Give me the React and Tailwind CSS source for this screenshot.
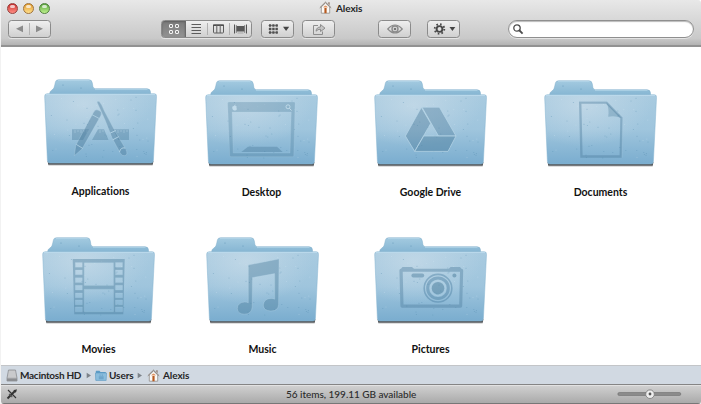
import React from "react";

const FONT = "font-['Lato','Noto_Sans',sans-serif] [font-variant-ligatures:none]";

const specks = Array.from({ length: 60 }, (_, i) => ({
  x: 5 + ((i * 37.7 + i * i * 3.1) % 103),
  y: 17 + ((i * 23.3 + i * i * 1.7) % 64),
  dark: i % 3 !== 0,
}));

function Folder({ children }) {
  return (
    <svg width="113" height="89" viewBox="0 0 113 89" className="block shrink-0">
      <defs>
        <linearGradient id="front" x1="0" y1="0" x2="0" y2="1">
          <stop offset="0" stopColor="#a9cbe0" />
          <stop offset="0.5" stopColor="#9fc5dd" />
          <stop offset="1" stopColor="#7aadcf" />
        </linearGradient>
        <radialGradient id="sheen" cx="0.35" cy="0.15" r="0.6">
          <stop offset="0" stopColor="#d4e2ec" stopOpacity="0.55" />
          <stop offset="1" stopColor="#d4e2ec" stopOpacity="0" />
        </radialGradient>
        <linearGradient id="back" x1="0" y1="0" x2="0" y2="1">
          <stop offset="0" stopColor="#a3cae0" />
          <stop offset="1" stopColor="#82b3d1" />
        </linearGradient>
        <linearGradient id="shade" x1="0" y1="0" x2="0" y2="1">
          <stop offset="0" stopColor="#3a3f44" />
          <stop offset="0.6" stopColor="#5b5e61" />
          <stop offset="1" stopColor="#fff" stopOpacity="0" />
        </linearGradient>
      </defs>
      <path d="M3.6 82H109.4L108.5 87.5H4.5Z" fill="url(#shade)" />
      <path
        d="M5.8 17V13.8Q6 12 8 11Q10.3 9.8 10.8 6L11.3 3.5Q11.8 .7 14.5 .7H45Q47.8 .7 48.3 4L48.9 7.5Q49.3 9.7 51.5 9.7H103Q106.3 9.7 106.5 13V17Z"
        fill="url(#back)" stroke="#80afcb" strokeWidth=".5"
      />
      <path
        d="M3.3 14.7H110.2Q112.8 14.7 112.5 17.5L109.4 81.5Q109.2 84 107 84H5.8Q3.6 84 3.4 81.5L.7 17.5Q.5 14.7 3.3 14.7Z"
        fill="url(#front)"
      />
      <path
        d="M3.3 14.7H110.2Q112.8 14.7 112.5 17.5L109.4 81.5Q109.2 84 107 84H5.8Q3.6 84 3.4 81.5L.7 17.5Q.5 14.7 3.3 14.7Z"
        fill="url(#sheen)" stroke="#86b4d0" strokeWidth=".5"
      />
      <path d="M2 15.4H111" stroke="#bcdbec" strokeWidth="1" />
      <path d="M14 1.5H45.5M51 10.4H103.5" stroke="#b4d6e8" strokeWidth=".8" />
      {specks.map((s, i) => (
        <circle key={i} cx={s.x} cy={s.y} r=".5" fill={s.dark ? "#4f87ab" : "#d4e8f4"} opacity=".42" />
      ))}
      <circle cx="19" cy="6" r=".6" fill="#4f87ab" opacity=".6" />
      <circle cx="37" cy="9" r=".6" fill="#4f87ab" opacity=".6" />
      <g fill="#4a7b9a" fillOpacity=".32">{children}</g>
    </svg>
  );
}

const light = "#b4d4e6";

const AppsGlyph = (
  <>
    <path d="M28 50.3H45L39 61H28ZM54 50.3H60L64.5 61H48ZM69 50.3H85V61H74.5Z" fillOpacity=".38" />
    <path d="M31 51v3M34 51v2M37 51v3M40 51v2M43 51v3M56 51v3M59 51v2M71 51v2M74 51v3M77 51v2M80 51v3M83 51v2" stroke={light} strokeWidth=".6" opacity=".8" />
    <path d="M49.6 33.2Q51.6 29.6 55 31.4Q58.6 33.2 56.7 36.8L38 70L30.3 76.7L31.8 66.2Z" fillOpacity=".46" stroke={light} strokeOpacity=".55" strokeWidth=".6" />
    <path d="M48 35.7L55.4 39.6M32.2 65.4L38.8 69.4" stroke={light} strokeWidth=".8" />
    <path d="M53.2 23.4Q53.4 21.3 55.4 22.8Q57.5 25 60.2 31.8L71.2 52.6L81.7 70Q84.4 75.2 81.2 76.6Q78.4 77.6 76.2 74L68 58.8L61.5 42Z" fillOpacity=".44" stroke={light} strokeOpacity=".55" strokeWidth=".6" />
    <path d="M65.8 54.3L71.8 51.5M68.8 60.8L74.8 57.6M75.4 73.1Q76.8 68 81 69" stroke={light} strokeWidth=".9" fill="none" />
  </>
);

const DesktopGlyph = (
  <>
    <path fillRule="evenodd" d="M24 22H89Q90 22 90 23L88.8 75.5Q88.7 76.7 87.5 76.7H26Q24.8 76.7 24.7 75.5L22.7 23.2Q22.7 22 24 22ZM27 32L28.2 73H85L86.3 32Z" stroke={light} strokeOpacity=".4" strokeWidth=".5" />
    <path d="M43 66.7H72L77.7 72H36.3Z" fillOpacity=".4" />
    <path d="M27.2 28Q27 25.7 29 25.9Q29.5 24.7 30.7 24.5Q30.5 25.8 30 26Q31.5 25.8 31.8 26.7Q30.8 28 32 29Q31 31 29.5 30.4Q27.7 30.8 27.2 28Z" fill="#c2dbea" fillOpacity="1" />
    <circle cx="83" cy="26.8" r="2" fill="none" stroke="#c2dbea" strokeWidth=".9" />
    <path d="M84.4 28.3L86.5 30.5" stroke="#c2dbea" strokeWidth="1" />
  </>
);

const DriveGlyph = (
  <g stroke="#b9d7e8" strokeWidth=".7" strokeLinejoin="round" fillOpacity=".44">
    <path d="M48 27.2H65.4L82 56H64.5Z" fillOpacity=".4" />
    <path d="M47.4 27.4L31.4 56L40.7 71.4L56.7 43.4Z" />
    <path d="M49.7 56H82L74 71.4H40.7Z" fillOpacity=".48" />
  </g>
);

const DocumentGlyph = (
  <>
    <path fillRule="evenodd" d="M35 21.4H63L78.7 37.5L77.9 77.7H36.3ZM37.4 23.8L38.6 75.3H75.6L76.3 38.3L62 23.8Z" fillOpacity=".4" />
    <path d="M62.5 22.5Q65.5 29 64.2 36.8Q71 35.5 77.5 38Z" />
    <path d="M35 21.4H63L78.7 37.5L77.9 77.7" fill="none" stroke={light} strokeOpacity=".5" strokeWidth=".5" />
  </>
);

const holes = [25.4, 33, 40.7, 48.3, 56, 62.9, 70];
const holePath = holes.map((y) => `M33.3 ${y}h7v4.8h-7ZM73.5 ${y}h7v4.8h-7Z`).join("");
const MoviesGlyph = (
  <>
    <path fillRule="evenodd" fillOpacity=".42" d={"M30.7 22H82.7L81.3 77.3H32.3ZM42.2 25.7V48.6H71.5V25.7ZM42.2 52.2V74.7H71.5V52.2Z" + holePath} />
    <path d={"M42.2 25.7V48.6H71.5V25.7ZM42.2 52.2V74.7H71.5V52.2Z" + holePath} fill="none" stroke={light} strokeOpacity=".4" strokeWidth=".5" />
  </>
);

const MusicGlyph = (
  <path
    d="M42.4 28L73 22L72.6 67.5Q72.3 74 64.8 74Q57.3 73.6 57.3 68Q58 61.5 65 61.4Q67.3 61.3 68.7 62.2V36.6L46.4 40.6L46.2 70Q45.8 77 38.4 77.2Q31.5 77 31.3 71.5Q31.8 65.3 38.8 65Q41 65 42.3 65.8Z"
    fillOpacity=".42" stroke={light} strokeOpacity=".55" strokeWidth=".6"
  />
);

const PicturesGlyph = (
  <>
    <path fillRule="evenodd" d="M25.4 33.5Q25.4 31.7 27 31.7L28.5 30H38L40 31.8H74.8L76.5 30H86L87.5 31.7Q89.2 31.8 89.2 33.5L88.2 69Q88.2 70.7 86.5 70.7H28.2Q26.5 70.7 26.4 69ZM28.7 34.7L29.5 67.5H85.2L86 34.7Z" fillOpacity=".4" />
    <rect x="37.4" y="36.6" width="12.8" height="4" rx="2" fillOpacity=".45" />
    <circle cx="80.4" cy="38.6" r="2" fillOpacity=".5" />
    <g fill="none" stroke="#447a9d" strokeOpacity=".42">
      <circle cx="64" cy="51.2" r="13.8" strokeWidth="1.6" />
      <circle cx="64" cy="51.2" r="10.3" strokeWidth="3" />
    </g>
    <circle cx="64" cy="51.2" r="6.2" fillOpacity=".5" />
    <circle cx="64" cy="51.2" r="7.6" fill="none" stroke={light} strokeOpacity=".6" strokeWidth=".7" />
  </>
);

function Item({ label, glyph, className = "" }) {
  return (
    <div className={"flex w-[113px] flex-col items-center " + className}>
      <Folder>{glyph}</Folder>
      <span className="mt-[15px] text-[10.5px] leading-4 font-bold whitespace-nowrap text-[#111]">{label}</span>
    </div>
  );
}

function Home({ className = "" }) {
  return (
    <svg width="13" height="13" viewBox="0 0 13 13" className={"shrink-0 " + className}>
      <path d="M2.3 6V12.2H10.7V6L6.5 2Z" fill="#fbfaf8" stroke="#8f8b88" strokeWidth=".8" />
      <path d="M.8 6.8L6.5 1.2L12.2 6.8" fill="none" stroke="#857a73" strokeWidth="1" />
      <path d="M9.3 1.2H10.6V4L9.3 2.8Z" fill="#8b7468" />
      <path d="M5.4 7H7.6V12.2H5.4Z" fill="#b8591f" />
      <path d="M4.2 6.6Q6.5 2.6 8.8 6.6Z" fill="#e19767" />
    </svg>
  );
}

const BTN = "flex h-[18px] items-center rounded-[3.5px] border border-[#8b8b8b] bg-linear-to-b from-[#efefef] to-[#d0d0d0] shadow-[0_1px_0_#e4e4e4]";

function Light({ className }) {
  return (
    <span className={"flex h-[11px] w-[11px] justify-center rounded-full border " + className}>
      <span className="mt-px h-[3px] w-[5px] rounded-full bg-white/70" />
    </span>
  );
}

function Toolbar() {
  return (
    <div className="flex h-[27px] items-start pt-[2px] pl-[7px]">
      <div className={BTN + " w-[43px]"}>
        <svg width="41" height="16" viewBox="0 0 41 16">
          <path d="M14 4.5V11.2L7 7.8ZM27 4.5V11.2L34 7.8Z" fill="#8b8b8b" />
          <path d="M20.5 2V14" stroke="#b3b3b3" />
        </svg>
      </div>
      <div className={BTN + " ml-[110px] w-[91px] overflow-hidden"}>
        <div className="flex h-full w-[24px] items-center justify-center border-r border-[#6b6b6b] bg-linear-to-b from-[#7b7b7b] to-[#929292] shadow-[inset_0_1px_2px_#606060]">
          <svg width="12" height="12" viewBox="0 0 12 12" fill="none" stroke="#f3f3f3" strokeWidth="1">
            <rect x="1.5" y="1.5" width="3" height="3" rx=".5" /><rect x="7.5" y="1.5" width="3" height="3" rx=".5" />
            <rect x="1.5" y="7.5" width="3" height="3" rx=".5" /><rect x="7.5" y="7.5" width="3" height="3" rx=".5" />
          </svg>
        </div>
        <svg width="65" height="16" viewBox="0 0 65 16" className="shrink-0">
          <path d="M5.5 3.5H15M5.5 6.5H15M5.5 9.5H15M5.5 12.5H15" stroke="#5c5c5c" strokeWidth="1" />
          <path d="M21.5 2V14M43.5 2V14" stroke="#b0b0b0" />
          <rect x="27.5" y="4" width="10" height="8" rx=".8" fill="none" stroke="#5c5c5c" strokeWidth="1" />
          <path d="M27 4.3H38" stroke="#505050" strokeWidth="1.6" />
          <path d="M30.8 4V12M34.2 4V12" stroke="#606060" />
          <path d="M48.5 3.5V12.5M60.5 3.5V12.5" stroke="#555" />
          <path d="M50.3 4V12M58.7 4V12" stroke="#8a8a8a" />
          <rect x="50.5" y="5" width="8" height="5.5" fill="#595959" />
          <path d="M51.5 12H57.5" stroke="#a5a5a5" />
        </svg>
      </div>
      <div className={BTN + " ml-[9px] w-[33px]"}>
        <svg width="31" height="16" viewBox="0 0 31 16">
          <path d="M6.5 4.5H16M6.5 8H16M6.5 11.5H16" stroke="#8a8a8a" strokeWidth="1" />
          <path d="M7 3.2h2.2v2.6H7zM10.3 3.2h2.2v2.6h-2.2zM13.6 3.2h2.2v2.6h-2.2zM7 6.7h2.2v2.5H7zM10.3 6.7h2.2v2.5h-2.2zM13.6 6.7h2.2v2.5h-2.2zM7 10.2h2.2v2.5H7zM10.3 10.2h2.2v2.5h-2.2zM13.6 10.2h2.2v2.5h-2.2z" fill="#505050" />
          <path d="M21 5.8H27.2L24.1 10Z" fill="#444" />
        </svg>
      </div>
      <div className={BTN + " ml-[8px] w-[33px] justify-center"}>
        <svg width="14" height="14" viewBox="0 0 14 14" fill="none" stroke="#8d8d8d">
          <path d="M6 3.5H1.5V12.5H10.5V9.5" />
          <path d="M4 9.2Q4.5 5 8.5 5V2.5L13 6.2L8.5 9.5V7.2Q5.8 7.2 4 9.2Z" fill="#c5c5c5" />
        </svg>
      </div>
      <div className={BTN + " ml-[43px] w-[33px] justify-center"}>
        <svg width="18" height="12" viewBox="0 0 18 12" fill="none" stroke="#8a8a8a">
          <path d="M1.8 6Q9 -2 16.2 6Q9 14 1.8 6Z" strokeWidth="1.2" />
          <circle cx="9" cy="6" r="3" strokeWidth="1.4" />
          <circle cx="9" cy="6" r="1.3" fill="#777" stroke="none" />
        </svg>
      </div>
      <div className={BTN + " ml-[16px] w-[33px]"}>
        <svg width="31" height="16" viewBox="0 0 31 16">
          <circle cx="11.5" cy="8" r="4.8" fill="none" stroke="#484848" strokeWidth="1.8" strokeDasharray="1.6 2.17" />
          <circle cx="11.5" cy="8" r="2.9" fill="none" stroke="#484848" strokeWidth="1.9" />
          <path d="M21.5 6H27.3L24.4 10Z" fill="#444" />
        </svg>
      </div>
      <div className="ml-[48px] flex h-[18px] w-[186px] items-center rounded-full border border-[#8f8f8f] bg-white pl-[3px] shadow-[inset_0_1px_1px_#bbb,0_1px_0_#e4e4e4]">
        <svg width="12" height="12" viewBox="0 0 12 12" fill="none" stroke="#4c4c4c">
          <circle cx="5" cy="5" r="3.2" strokeWidth="1.3" />
          <path d="M7.5 7.5L10.6 10.6" strokeWidth="1.8" />
        </svg>
      </div>
    </div>
  );
}

function Chevron({ className }) {
  return (
    <svg width="6" height="7" viewBox="0 0 6 7" className={"shrink-0 " + className}>
      <path d="M.7 .8L5 3.5L.7 6.2Z" fill="#7c8289" />
    </svg>
  );
}

export default function App() {
  return (
    <div className={"h-[404px] w-[701px] overflow-hidden bg-[#f2f2f2] pl-px " + FONT}>
      <div className="flex h-[404px] w-[700px] flex-col overflow-hidden rounded-b-[3px] bg-white">
        <header className="h-[47px] shrink-0 rounded-tr-[3px] border-b-2 border-[#929292] bg-linear-to-b from-[#e8e8e8] via-[#c9c9c9] via-85% to-[#b3b3b3]">
          <div className="flex h-[18px] items-center">
            <div className="flex w-[318px] gap-[5px] pb-[2px] pl-[6px]">
              <Light className="border-[#96403c] bg-linear-to-b from-[#c9282c] to-[#ff8c83]" />
              <Light className="border-[#a1733a] bg-linear-to-b from-[#e09a25] to-[#ffe08a]" />
              <Light className="border-[#52803f] bg-linear-to-b from-[#58a43b] to-[#bdf18c]" />
            </div>
            <Home className="mb-[3px]" />
            <span className="ml-[4px] pb-[2px] text-[10px] leading-4 font-bold tracking-[-0.1px] text-[#262626]">Alexis</span>
          </div>
          <Toolbar />
        </header>
        <main className="flex h-[318px] shrink-0 flex-col">
          <div className="grid h-[157px] grid-cols-[161px_169px_170px_113px] pt-[32px] pl-[43px]">
            <Item label="Applications" glyph={AppsGlyph} />
            <Item label="Desktop" glyph={DesktopGlyph} className="pt-px" />
            <Item label="Google Drive" glyph={DriveGlyph} className="pt-[.6px]" />
            <Item label="Documents" glyph={DocumentGlyph} className="pt-[.6px]" />
          </div>
          <div className="grid grid-cols-[164px_168px_113px] pt-[32.8px] pl-[41px]">
            <Item label="Movies" glyph={MoviesGlyph} />
            <Item label="Music" glyph={MusicGlyph} />
            <Item label="Pictures" glyph={PicturesGlyph} />
          </div>
        </main>
        <nav className="flex h-[19px] shrink-0 items-center border-t border-[#c3c5c8] bg-[#d1d9e2] text-[10px] leading-4 font-bold tracking-[-0.1px] text-[#262626]">
          <svg width="12" height="13" viewBox="0 0 12 13" className="ml-[5px] shrink-0">
            <path d="M2.5 1H9.5L11 9V12H1V9Z" fill="#b5b6b8" stroke="#8e9195" strokeWidth=".8" />
            <path d="M3 1.8H9L10.2 8.6H1.8Z" fill="#c9cacc" />
            <path d="M1 9.5H11V12H1Z" fill="#8c8e91" />
          </svg>
          <span className="ml-[2px] w-[62px] whitespace-nowrap tracking-[-0.28px]">Macintosh HD</span>
          <Chevron className="ml-[4px]" />
          <svg width="12" height="11" viewBox="0 0 12 11" className="ml-[3px] shrink-0">
            <path d="M.8 1.2Q.8 .7 1.3 .7H4.5L5.5 2H10.8V10.2H.8Z" fill="#5c9cc6" />
            <path d="M.4 3H11.6L11.2 10.4H.8Z" fill="#8abddd" stroke="#5994bd" strokeWidth=".5" />
            <path d="M4.5 4.5h1.2v1.3H4.5zM6.7 4.5H8v1.3H6.7zM3.8 6.3h4.8v3H3.8z" fill="#6fa5ca" />
          </svg>
          <span className="ml-[2px] w-[24px] whitespace-nowrap">Users</span>
          <Chevron className="ml-[4px]" />
          <Home className="ml-[4px]" />
          <span className="ml-[3px]">Alexis</span>
        </nav>
        <footer className="flex h-[20px] shrink-0 items-center border-t border-b border-t-[#858585] border-b-[#777] bg-linear-to-b from-[#d2d2d2] to-[#aaaaaa] shadow-[inset_0_1px_0_#e2e2e2]">
          <svg width="12" height="12" viewBox="0 0 12 12" className="ml-[5px] shrink-0">
            <path d="M1.5 10.5L9.7 2.3" stroke="#333" strokeWidth="2" />
            <path d="M7.4 2.4L9.8 4.8L11 1.2Z" fill="#333" />
            <path d="M2 2L10 10" stroke="#333" strokeWidth="1.1" />
            <path d="M3 5.8L6.3 9.2" stroke="#555" strokeWidth="1.2" />
          </svg>
          <span className="ml-[268px] w-[331px] pb-px text-[10px] leading-4 font-medium tracking-[-0.03px] whitespace-nowrap text-[#2b2b2b]">56 items, 199.11 GB available</span>
          <svg width="65" height="12" viewBox="0 0 65 12" className="shrink-0">
            <rect x=".8" y="4.5" width="63" height="3" rx="1.5" fill="#8b8b8b" stroke="#707070" strokeWidth=".6" />
            <circle cx="33" cy="6.2" r="4.3" fill="#eee" stroke="#787878" strokeWidth=".8" />
            <circle cx="33" cy="6" r="1.4" fill="#555" />
          </svg>
        </footer>
      </div>
    </div>
  );
}
